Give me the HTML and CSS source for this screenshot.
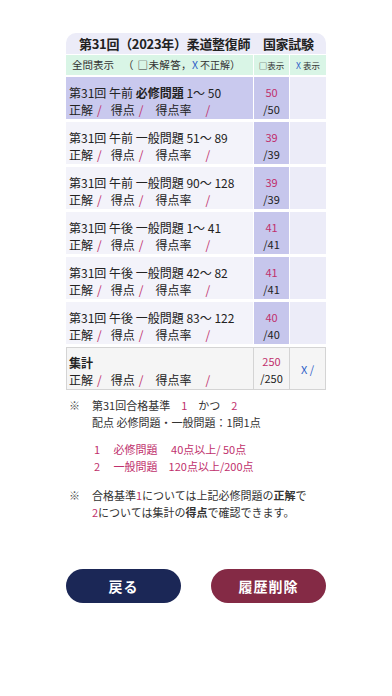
FILE: index.html
```html
<!DOCTYPE html>
<html lang="ja">
<head>
<meta charset="utf-8">
<link rel="stylesheet" href="styles.css">
</head>
<body>
<div class="page">
  <div class="table">
    <div class="title">第31回（2023年）柔道整復師　国家試験</div>
    <div class="hrow">
      <div class="hcell hmain">全問表示<span class="hpo">（</span><span class="hq">□未解答，</span><span class="blue hx">X</span><span class="hn">不正解</span><span class="hpc">）</span></div>
      <div class="hcell hsmall">□表示</div>
      <div class="hcell hsmall"><span class="blue">X</span> 表示</div>
    </div>

    <div class="row first">
      <div class="cmain">
        <div class="l1">第31回 午前 <b>必修問題</b> 1〜 50</div>
        <div class="l2"><span>正解</span><span class="sl s1">/</span><span class="g1">得点</span><span class="sl s2">/</span><span class="g2">得点率</span><span class="sl s3">/</span></div>
      </div>
      <div class="cscore"><div class="pk">50</div><div>/50</div></div>
      <div class="cx"></div>
    </div>

    <div class="row">
      <div class="cmain">
        <div class="l1">第31回 午前 一般問題 51〜 89</div>
        <div class="l2"><span>正解</span><span class="sl s1">/</span><span class="g1">得点</span><span class="sl s2">/</span><span class="g2">得点率</span><span class="sl s3">/</span></div>
      </div>
      <div class="cscore"><div class="pk">39</div><div>/39</div></div>
      <div class="cx"></div>
    </div>

    <div class="row">
      <div class="cmain">
        <div class="l1">第31回 午前 一般問題 90〜 128</div>
        <div class="l2"><span>正解</span><span class="sl s1">/</span><span class="g1">得点</span><span class="sl s2">/</span><span class="g2">得点率</span><span class="sl s3">/</span></div>
      </div>
      <div class="cscore"><div class="pk">39</div><div>/39</div></div>
      <div class="cx"></div>
    </div>

    <div class="row">
      <div class="cmain">
        <div class="l1">第31回 午後 一般問題 1〜 41</div>
        <div class="l2"><span>正解</span><span class="sl s1">/</span><span class="g1">得点</span><span class="sl s2">/</span><span class="g2">得点率</span><span class="sl s3">/</span></div>
      </div>
      <div class="cscore"><div class="pk">41</div><div>/41</div></div>
      <div class="cx"></div>
    </div>

    <div class="row">
      <div class="cmain">
        <div class="l1">第31回 午後 一般問題 42〜 82</div>
        <div class="l2"><span>正解</span><span class="sl s1">/</span><span class="g1">得点</span><span class="sl s2">/</span><span class="g2">得点率</span><span class="sl s3">/</span></div>
      </div>
      <div class="cscore"><div class="pk">41</div><div>/41</div></div>
      <div class="cx"></div>
    </div>

    <div class="row">
      <div class="cmain">
        <div class="l1">第31回 午後 一般問題 83〜 122</div>
        <div class="l2"><span>正解</span><span class="sl s1">/</span><span class="g1">得点</span><span class="sl s2">/</span><span class="g2">得点率</span><span class="sl s3">/</span></div>
      </div>
      <div class="cscore"><div class="pk">40</div><div>/40</div></div>
      <div class="cx"></div>
    </div>

    <div class="total">
      <div class="tmain">
        <div class="l1"><b>集計</b></div>
        <div class="l2"><span>正解</span><span class="sl s1">/</span><span class="g1">得点</span><span class="sl s2">/</span><span class="g2">得点率</span><span class="sl s3">/</span></div>
      </div>
      <div class="tscore"><div class="pk">250</div><div>/250</div></div>
      <div class="tx"><span class="blue">X /</span></div>
    </div>
  </div>

  <div class="notes">
    <div class="note">
      <span class="mark">※</span>
      <div class="ntext">
        <div>第31回合格基準　<span class="pk">1</span>　かつ　<span class="pk">2</span></div>
        <div>配点 必修問題・一般問題：1問1点</div>
        <div class="crit">
          <div class="pk">1　 必修問題　 40点以上/ 50点</div>
          <div class="pk">2　 一般問題　120点以上/200点</div>
        </div>
      </div>
    </div>
    <div class="note note2">
      <span class="mark">※</span>
      <div class="ntext">
        <div>合格基準<span class="pk">1</span>については上記必修問題の<b>正解</b>で</div>
        <div><span class="pk">2</span>については集計の<b>得点</b>で確認できます。</div>
      </div>
    </div>
  </div>

  <div class="buttons">
    <button class="btn back">戻る</button>
    <button class="btn del">履歴削除</button>
  </div>
</div>
</body>
</html>
```

FILE: styles.css
```css
* { box-sizing: border-box; }
html, body {
  margin: 0;
  padding: 0;
  background: #ffffff;
}
body {
  font-family: "Noto Sans CJK JP", "Noto Sans", sans-serif;
  color: #222222;
  text-spacing-trim: space-all;
}
.page {
  width: 392px;
  padding-top: 33px;
}
.table {
  margin-left: 66px;
  width: 260px;
}
.title {
  height: 21px;
  background: #ececf8;
  border-radius: 10px 10px 0 0;
  font-size: 13px;
  font-weight: 700;
  line-height: 21px;
  padding-left: 13px;
  letter-spacing: -0.3px;
  white-space: nowrap;
}
.hrow {
  display: grid;
  grid-template-columns: 187px 35px 1fr;
  column-gap: 1px;
  margin-top: 1px;
  height: 20px;
}
.hcell {
  background: #d9f5e6;
  line-height: 20px;
  white-space: nowrap;
}
.hmain {
  font-size: 10.5px;
  padding-left: 6px;
  color: #333;
}
.hpo { margin-left: 9px; }
.hq { margin-left: 4px; letter-spacing: 0.4px; }
.hx { margin-left: 0; }
.hn { margin-left: 2px; font-size: 10px; }
.hpc { margin-left: 0; }
.hsmall {
  font-size: 8.5px;
  text-align: center;
  color: #333;
}
.blue { color: #2d5fc8; }
.pk { color: #c0306c; }
.row {
  display: grid;
  grid-template-columns: 187px 35px 1fr;
  column-gap: 1px;
  height: 42px;
  margin-top: 3px;
}
.row.first { margin-top: 2px; }
.cmain {
  background: #f3f3fa;
  padding: 7px 0 0 3px;
  font-size: 12px;
  line-height: 17px;
  white-space: nowrap;
}
.row.first .cmain { background: #c9c9ee; }
.cscore {
  background: #c6c6ec;
  padding-top: 7px;
  font-size: 11px;
  line-height: 17px;
  text-align: center;
}
.cx { background: #ececf8; }
.l2 { display: flex; align-items: baseline; }
.sl { color: #c0306c; }
.s1 { margin-left: 4px; }
.g1 { margin-left: 9px; }
.s2 { margin-left: 4px; }
.g2 { margin-left: 12px; }
.s3 { margin-left: 14px; }
.total {
  display: grid;
  grid-template-columns: 187px 36px 1fr;
  height: 43px;
  margin-top: 3px;
  border: 1px solid #d4d4d4;
  background: #f5f5f5;
}
.tmain {
  padding: 6px 0 0 2px;
  font-size: 12px;
  line-height: 17px;
  white-space: nowrap;
  border-right: 1px solid #d4d4d4;
}
.tscore {
  padding-top: 5px;
  font-size: 11px;
  line-height: 17px;
  text-align: center;
  border-right: 1px solid #d4d4d4;
}
.tx {
  font-size: 11px;
  display: flex;
  align-items: center;
  justify-content: center;
}
.notes {
  margin-left: 69px;
  margin-top: 7px;
  font-size: 11px;
  line-height: 17px;
  color: #333;
}
.note {
  display: flex;
}
.mark {
  width: 23px;
  flex: none;
  color: #555;
}
.crit {
  margin-top: 10px;
  padding-left: 2px;
}
.note2 { margin-top: 12px; }
.buttons {
  margin-left: 66px;
  width: 260px;
  margin-top: 48px;
  display: flex;
  justify-content: space-between;
}
.btn {
  width: 115px;
  height: 34px;
  border: none;
  border-radius: 17px;
  color: #ffffff;
  font-family: "Noto Sans CJK JP", "Noto Sans", sans-serif;
  font-size: 14px;
  font-weight: 700;
  letter-spacing: 1px;
  padding: 0;
}
.back { background: #1b2756; }
.del { background: #842a45; }
```
